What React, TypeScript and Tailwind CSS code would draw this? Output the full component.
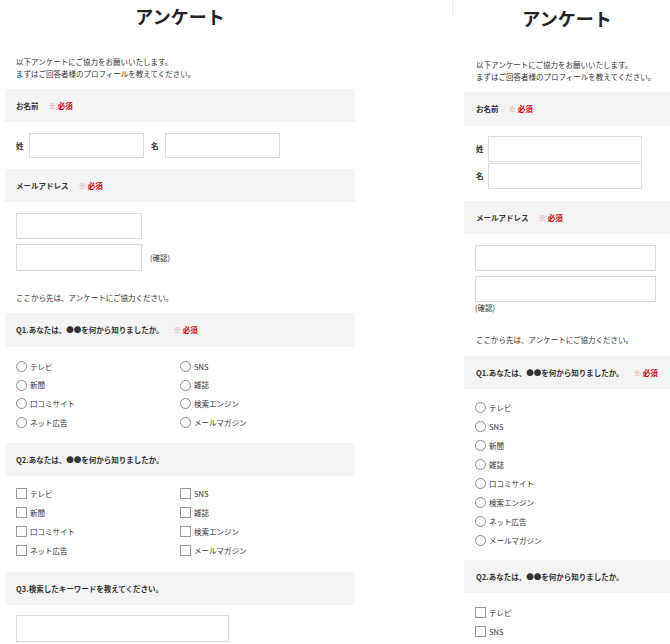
import React from "react";

const font = { fontFamily: '"Noto Sans CJK JP", "Noto Sans", sans-serif' };

function Req() {
  return (
    <span className="ml-[10px] font-bold text-[#d0000c]">
      <span className="font-normal text-[#e58a8a]">※</span> 必須
    </span>
  );
}

function Band({ label, req, className = "" }: { label: string; req?: boolean; className?: string }) {
  return (
    <div className={"flex h-[33px] items-center bg-[#f4f4f4] text-[7.5px] font-bold text-[#333] " + className}>
      <span>{label}</span>
      {req && <Req />}
    </div>
  );
}

function Radio() {
  return <span className="inline-block h-[11px] w-[11px] shrink-0 rounded-full border border-[#8a8a8a] bg-white" />;
}
function Check() {
  return <span className="inline-block h-[11px] w-[11px] shrink-0 border border-[#9a9a9a] bg-white" />;
}

function Opt({ kind, label, h }: { kind: "r" | "c"; label: string; h: string }) {
  return (
    <div className={"flex items-center gap-[3px] text-[7.5px] text-[#333] " + h}>
      {kind === "r" ? <Radio /> : <Check />}
      <span>{label}</span>
    </div>
  );
}

function Input({ className }: { className: string }) {
  return <div className={"border border-[#dcdcdc] bg-white " + className} />;
}

const leftOpts = [
  ["テレビ", "SNS"],
  ["新聞", "雑誌"],
  ["口コミサイト", "検索エンジン"],
  ["ネット広告", "メールマガジン"],
];
const mobileOpts = ["テレビ", "SNS", "新聞", "雑誌", "口コミサイト", "検索エンジン", "ネット広告", "メールマガジン"];

function Left() {
  return (
    <div className="w-[360px] shrink-0 px-[5px]">
      <div className="pt-[4px] text-center text-[18px] font-bold leading-[24px] text-[#222]">アンケート</div>
      <div className="mt-[28px] pl-[11px] text-[7.5px] leading-[11.5px] text-[#333]">
        <p>以下アンケートにご協力をお願いいたします。</p>
        <p>まずはご回答者様のプロフィールを教えてください。</p>
      </div>
      <Band label="お名前" req className="mt-[10px] pl-[11px]" />
      <div className="mt-[11px] flex items-center pl-[11px] text-[7.5px] font-bold text-[#333]">
        <span className="w-[13px]">姓</span>
        <Input className="h-[25px] w-[115px]" />
        <span className="ml-[7px] w-[14px]">名</span>
        <Input className="h-[25px] w-[115px]" />
      </div>
      <Band label="メールアドレス" req className="mt-[11px] pl-[11px]" />
      <div className="mt-[11px] flex flex-col gap-[5px] pl-[11px]">
        <Input className="h-[26px] w-[126px]" />
        <div className="flex items-center">
          <Input className="h-[27px] w-[126px]" />
          <span className="ml-[8px] text-[7.5px] text-[#333]">(確認)</span>
        </div>
      </div>
      <p className="mt-[21px] pl-[11px] text-[7.5px] leading-[12px] text-[#333]">ここから先は、アンケートにご協力ください。</p>
      <Band label="Q1.あなたは、●●を何から知りましたか。" req className="mt-[9px] h-[34px] pl-[11px]" />
      <div className="mt-[10px] grid grid-cols-[164px_1fr] pl-[11px]">
        {leftOpts.map(([a, b]) => (
          <React.Fragment key={a}>
            <Opt kind="r" label={a} h="h-[18.7px]" />
            <Opt kind="r" label={b} h="h-[18.7px]" />
          </React.Fragment>
        ))}
      </div>
      <Band label="Q2.あなたは、●●を何から知りましたか。" className="mt-[11px] pl-[11px]" />
      <div className="mt-[8.5px] grid grid-cols-[164px_1fr] pl-[11px]">
        {leftOpts.map(([a, b]) => (
          <React.Fragment key={a}>
            <Opt kind="c" label={a} h="h-[19px]" />
            <Opt kind="c" label={b} h="h-[19px]" />
          </React.Fragment>
        ))}
      </div>
      <Band label="Q3.検索したキーワードを教えてください。" className="mt-[11.5px] h-[32px] pl-[11px]" />
      <div className="mt-[10px] pl-[11px]">
        <Input className="h-[27px] w-[213px]" />
      </div>
    </div>
  );
}

function Mobile() {
  return (
    <div className="w-[206px] shrink-0">
      <div className="pt-[6px] text-center text-[18px] font-bold leading-[24px] text-[#222]">アンケート</div>
      <div className="mt-[29px] pl-[12px] text-[7.5px] leading-[12px] text-[#333]">
        <p>以下アンケートにご協力をお願いいたします。</p>
        <p>まずはご回答者様のプロフィールを教えてください。</p>
      </div>
      <Band label="お名前" req className="mt-[9px] h-[34px] pl-[12px]" />
      <div className="mt-[10px] flex flex-col gap-[1px] pl-[12px] text-[7.5px] font-bold text-[#333]">
        <div className="flex items-center">
          <span className="w-[12px]">姓</span>
          <Input className="h-[26px] w-[154px]" />
        </div>
        <div className="flex items-center">
          <span className="w-[12px]">名</span>
          <Input className="h-[26px] w-[154px]" />
        </div>
      </div>
      <Band label="メールアドレス" req className="mt-[12px] pl-[12px]" />
      <div className="mt-[11px] flex flex-col gap-[5px] pl-[11px]">
        <Input className="h-[26px] w-[181px]" />
        <Input className="h-[26px] w-[181px]" />
      </div>
      <p className="pl-[11px] text-[7.5px] leading-[12px] text-[#333]">(確認)</p>
      <p className="mt-[20px] pl-[12px] text-[7.5px] leading-[12px] text-[#333]">ここから先は、アンケートにご協力ください。</p>
      <Band label="Q1.あなたは、●●を何から知りましたか。" req className="mt-[10px] pl-[12px]" />
      <div className="mt-[9.5px] flex flex-col pl-[11px]">
        {mobileOpts.map((o) => (
          <Opt key={o} kind="r" label={o} h="h-[18.9px]" />
        ))}
      </div>
      <Band label="Q2.あなたは、●●を何から知りましたか。" className="mt-[10.5px] pl-[12px]" />
      <div className="mt-[9.5px] flex flex-col pl-[11px]">
        {mobileOpts.slice(0, 2).map((o) => (
          <Opt key={o} kind="c" label={o} h="h-[19px]" />
        ))}
      </div>
    </div>
  );
}

export default function App() {
  return (
    <div className="flex h-[644px] w-[670px] overflow-hidden bg-white" style={font}>
      <Left />
      <div className="flex w-[104px] shrink-0 justify-end pr-[11px]">
        <div className="h-[17px] w-px bg-[#ececec]" />
      </div>
      <Mobile />
    </div>
  );
}
